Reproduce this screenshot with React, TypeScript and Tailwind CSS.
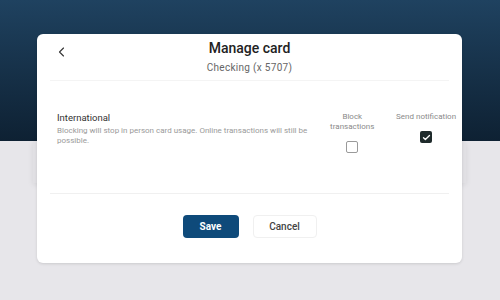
import React from "react";

const Chevron: React.FC = () => (
  <svg width="12" height="12" viewBox="0 0 24 24" fill="none" stroke="#333" strokeWidth="2.2" strokeLinecap="round" strokeLinejoin="round">
    <path d="M15 4l-8 8 8 8" />
  </svg>
);

export default function App() {
  return (
    <div className="relative w-[500px] h-[300px] overflow-hidden bg-[#e7e6ea] font-['Roboto',sans-serif]">
      <div className="h-[141px] bg-gradient-to-b from-[#1f4260] to-[#0e2133]" />
      <div className="absolute left-[33px] top-[141px] w-[433px] h-[42px] bg-[#e1e0e4] shadow-[0_2px_6px_rgba(0,0,0,0.08)]" />

      <div className="absolute left-[37px] top-[34px] w-[425px] h-[229px] rounded-[6px] bg-white shadow-[0_1px_3px_rgba(0,0,0,0.12)] flex flex-col">
        <div className="relative flex flex-col items-center pt-[6px] h-[47px] border-b border-[#f4f4f4] mx-[13px]">
          <div className="absolute left-[6px] top-[12px]">
            <Chevron />
          </div>
          <div className="text-[14px] leading-[17px] font-medium text-[#222]">Manage card</div>
          <div className="mt-[4px] text-[10px] leading-[13px] text-[#666] tracking-[0.3px]">Checking (x 5707)</div>
        </div>

        <div className="flex h-[112px] pt-[31px] pl-[20px]">
          <div className="w-[262px] pr-[6px]">
            <div className="text-[9.5px] leading-[12px] text-[#333]">International</div>
            <div className="mt-[2px] text-[8px] leading-[10px] text-[#9a9a9a]">
              Blocking will stop in person card usage. Online transactions will still be possible.
            </div>
          </div>
          <div className="w-[52px] ml-[8px] flex flex-col items-center">
            <div className="text-[8px] leading-[10px] text-[#8a8a8a] text-center">Block transactions</div>
            <div className="mt-[9px] w-[12px] h-[12px] rounded-[2px] border border-[#9a9a9a] bg-white" />
          </div>
          <div className="w-[72px] ml-[12px] flex flex-col items-center">
            <div className="text-[8px] leading-[10px] text-[#8a8a8a] text-center whitespace-nowrap">Send notification</div>
            <div className="mt-[9px] w-[12px] h-[12px] rounded-[2px] bg-[#1e2a2b] flex items-center justify-center">
              <svg width="9" height="9" viewBox="0 0 24 24" fill="none" stroke="white" strokeWidth="3.5" strokeLinecap="round" strokeLinejoin="round">
                <path d="M4 12.5l5 5L20 6.5" />
              </svg>
            </div>
          </div>
        </div>

        <div className="mx-[13px] border-t border-[#f0f0f0]" />

        <div className="flex justify-center gap-[14px] pt-[21px]">
          <button className="w-[56px] h-[23px] rounded-[4px] bg-[#0e4a7a] text-white text-[10px] font-bold">Save</button>
          <button className="w-[64px] h-[23px] rounded-[4px] bg-white border border-[#f0f0f0] text-[#444] text-[10px] font-medium">Cancel</button>
        </div>
      </div>
    </div>
  );
}
